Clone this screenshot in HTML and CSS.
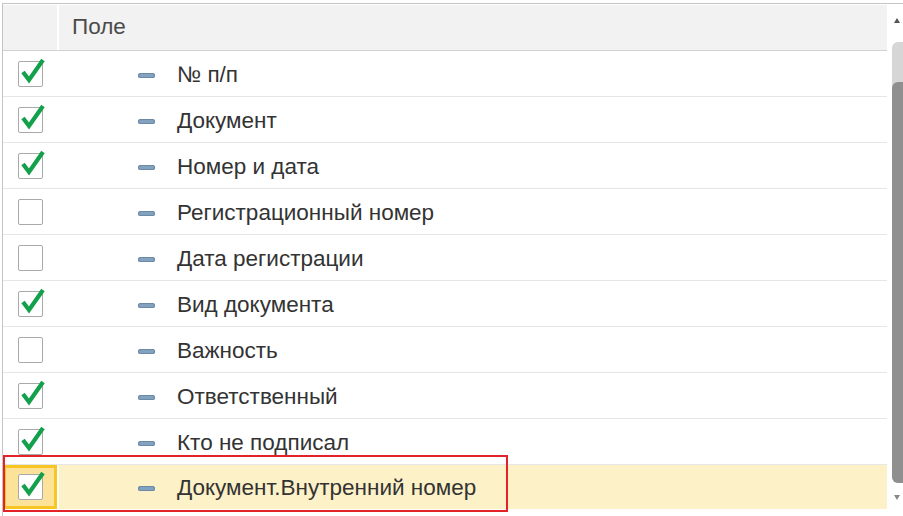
FILE: index.html
```html
<!DOCTYPE html>
<html lang="ru">
<head>
    <meta charset="UTF-8">
    <title>Поля</title>
    <link rel="stylesheet" href="styles.css">
</head>
<body>
    <div class="frame">
        <div class="grid">
            <div class="head">
                <div class="col-check"></div>
                <div class="col-field">Поле</div>
            </div>
            <div class="row">
                <div class="col-check"><span class="box checked"></span></div>
                <div class="col-field"><span class="dash"></span>№ п/п</div>
            </div>
            <div class="row">
                <div class="col-check"><span class="box checked"></span></div>
                <div class="col-field"><span class="dash"></span>Документ</div>
            </div>
            <div class="row">
                <div class="col-check"><span class="box checked"></span></div>
                <div class="col-field"><span class="dash"></span>Номер и дата</div>
            </div>
            <div class="row">
                <div class="col-check"><span class="box"></span></div>
                <div class="col-field"><span class="dash"></span>Регистрационный номер</div>
            </div>
            <div class="row">
                <div class="col-check"><span class="box"></span></div>
                <div class="col-field"><span class="dash"></span>Дата регистрации</div>
            </div>
            <div class="row">
                <div class="col-check"><span class="box checked"></span></div>
                <div class="col-field"><span class="dash"></span>Вид документа</div>
            </div>
            <div class="row">
                <div class="col-check"><span class="box"></span></div>
                <div class="col-field"><span class="dash"></span>Важность</div>
            </div>
            <div class="row">
                <div class="col-check"><span class="box checked"></span></div>
                <div class="col-field"><span class="dash"></span>Ответственный</div>
            </div>
            <div class="row">
                <div class="col-check"><span class="box checked"></span></div>
                <div class="col-field"><span class="dash"></span>Кто не подписал</div>
            </div>
            <div class="row selected">
                <div class="col-check"><span class="box checked"></span></div>
                <div class="col-field"><span class="dash"></span>Документ.Внутренний номер</div>
            </div>
        </div>
        <div class="scroll">
            <div class="arrow up"></div>
            <div class="track"><div class="thumb"></div></div>
            <div class="arrow down"></div>
        </div>
    </div>
    <div class="mark"></div>
</body>
</html>
```

FILE: styles.css
```css
body {
    margin: 0;
    background: #fff;
    font-family: "Liberation Sans", Arial, sans-serif;
    font-size: 22.5px;
    color: #333;
    position: relative;
    height: 516px;
    overflow: hidden;
}
.frame {
    margin: 3px 0 0 2px;
    border-top: 1px solid #c4c4c4;
    border-left: 1px solid #c4c4c4;
    display: flex;
    height: 512px;
}
.grid {
    width: 884px;
}
.head {
    display: flex;
    height: 46px;
    background: #f2f2f2;
    border-bottom: 1px solid #d2d2d2;
    box-sizing: border-box;
    margin-top: 1px;
}
.head .col-field {
    border-left: 2px solid #fff;
    padding-left: 13px;
    padding-bottom: 4px;
    color: #4a4a4a;
}
.col-check {
    width: 54px;
    flex-shrink: 0;
    display: flex;
    align-items: center;
    justify-content: center;
    box-sizing: border-box;
}
.col-field {
    flex: 1;
    display: flex;
    align-items: center;
    padding-left: 81px;
    padding-top: 2px;
}
.row {
    display: flex;
    height: 46px;
    border-bottom: 1px solid #e6e6e6;
    box-sizing: border-box;
}
.row.selected {
    border-bottom: none;
    height: 44px;
}
.row.selected .col-check {
    background: #fde39a;
    border: 3px solid #f8c622;
}
.row.selected .col-field {
    background: #fdf1c7;
    margin-left: 2px;
    padding-left: 79px;
}
.box {
    position: relative;
    width: 23px;
    height: 24px;
    border: 1px solid #a9a9a9;
    border-radius: 2px;
    background: #fff;
}
.box.checked::after {
    content: "";
    position: absolute;
    left: -1px;
    top: -6px;
    width: 30px;
    height: 30px;
    background: url("data:image/svg+xml;utf8,<svg xmlns='http://www.w3.org/2000/svg' width='30' height='30'><polyline points='5,16 11,24 25,4' fill='none' stroke='%2312a04a' stroke-width='4.2'/></svg>") no-repeat;
}
.dash {
    width: 17px;
    height: 5px;
    border-radius: 3px;
    background: #82a2bf;
    box-shadow: inset 0 0 0 1px #6a8aa8;
    margin-right: 22px;
    margin-top: 1px;
}
.scroll {
    flex: 1;
    display: flex;
    flex-direction: column;
    align-items: flex-end;
}
.arrow {
    width: 0;
    height: 0;
    border-left: 3px solid transparent;
    border-right: 3px solid transparent;
    margin-right: 3px;
}
.arrow.up {
    border-bottom: 5px solid #555;
    margin-top: 14px;
}
.arrow.down {
    border-top: 5px solid #888;
    margin-top: 12px;
}
.track {
    width: 11px;
    height: 441px;
    margin-top: 19px;
    background: #d6d6d6;
    border-radius: 6px 0 0 6px;
    display: flex;
    flex-direction: column;
    justify-content: flex-end;
}
.thumb {
    height: 401px;
    background: #8f8f8f;
    border-radius: 6px 0 0 6px;
}
.mark {
    position: absolute;
    left: 3px;
    top: 455px;
    width: 501px;
    height: 53px;
    border: 2px solid #e3222a;
}
```
